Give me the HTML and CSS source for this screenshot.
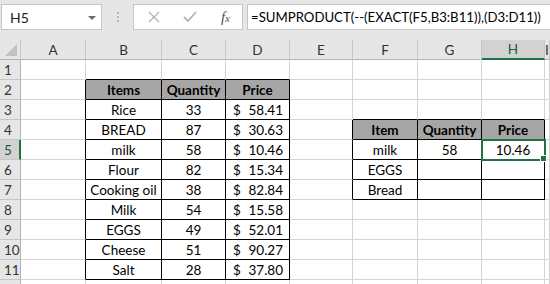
FILE: index.html
```html
<!DOCTYPE html>
<html lang="en">
<head>
  <meta charset="UTF-8">
  <title>SUMPRODUCT EXACT - Sheet</title>
  <link rel="stylesheet" href="styles.css">
</head>
<body>
  <div class="toolbar">
    <div class="name-box">
      <span>H5</span>
      <svg class="caret" width="8" height="4" viewBox="0 0 8 4"><path d="M0 0h8L4 4z" fill="#6d6d6d"/></svg>
    </div>
    <div class="grip">
      <i></i><i></i><i></i>
    </div>
    <div class="fx-buttons">
      <svg width="12" height="12" viewBox="0 0 12 12"><path d="M1 1l10 10M11 1L1 11" stroke="#b4b4b4" stroke-width="1.3" fill="none"/></svg>
      <svg width="14" height="12" viewBox="0 0 14 12"><path d="M1 6l4 4 8-9" stroke="#b4b4b4" stroke-width="1.8" fill="none"/></svg>
      <span class="fx">f<sub>x</sub></span>
    </div>
    <div class="formula">=SUMPRODUCT(--(EXACT(F5,B3:B11)),(D3:D11))</div>
  </div>

  <div class="sheet" id="sheet"></div>

  <script>
    const cols = ['A', 'B', 'C', 'D', 'E', 'F', 'G', 'H', 'I'];
    const selected = { row: 5, col: 'H' };

    // cell values by address
    const cells = {
      B2: 'Items', C2: 'Quantity', D2: 'Price',
      F4: 'Item', G4: 'Quantity', H4: 'Price',
      F5: 'milk', G5: '58', H5: '10.46',
      F6: 'EGGS', F7: 'Bread'
    };

    const items = [
      ['Rice', 33, '58.41'],
      ['BREAD', 87, '30.63'],
      ['milk', 58, '10.46'],
      ['Flour', 82, '15.34'],
      ['Cooking oil', 38, '82.84'],
      ['Milk', 54, '15.58'],
      ['EGGS', 49, '52.01'],
      ['Cheese', 51, '90.27'],
      ['Salt', 28, '37.80']
    ];
    items.forEach((item, i) => {
      cells['B' + (i + 3)] = item[0];
      cells['C' + (i + 3)] = String(item[1]);
      cells['D' + (i + 3)] = '$|' + item[2];
    });

    // bordered ranges: [firstCol, lastCol, firstRow, lastRow]
    const tables = [[1, 3, 2, 11], [5, 7, 4, 7]];
    const headerRows = { 2: [1, 3], 4: [5, 7] };

    function inTable(r, c) {
      return tables.some((t) => c >= t[0] && c <= t[1] && r >= t[2] && r <= t[3]);
    }

    function isHeader(r, c) {
      const h = headerRows[r];
      return h && c >= h[0] && c <= h[1] && inTable(r, c);
    }

    const sheet = document.getElementById('sheet');

    function addCell(text, cls) {
      const div = document.createElement('div');
      div.className = cls;
      if (text) div.textContent = text;
      sheet.appendChild(div);
      return div;
    }

    // column headers
    addCell('', 'corner');
    cols.forEach((c) => {
      addCell(c, 'col-head' + (c === selected.col ? ' active' : ''));
    });

    for (let r = 1; r <= 12; r++) {
      addCell(String(r), 'row-head' + (r === selected.row ? ' active' : ''));
      cols.forEach((c, ci) => {
        const classes = ['cell'];
        if (inTable(r, ci)) classes.push('boxed');
        if (inTable(r, ci + 1)) classes.push('edge-right');
        if (inTable(r + 1, ci)) classes.push('edge-bottom');
        if (isHeader(r, ci)) classes.push('head');
        if (r === selected.row && c === selected.col) classes.push('selected');

        const value = cells[c + r] || '';
        if (value.startsWith('$|')) {
          classes.push('money');
          const div = addCell('', classes.join(' '));
          div.innerHTML = '<span>$</span><span>' + value.slice(2) + '</span>';
        } else {
          addCell(value, classes.join(' '));
        }
      });
    }
  </script>
</body>
</html>
```

FILE: styles.css
```css
body {
  margin: 0;
  padding: 0;
  font-family: Lato, "Open Sans", sans-serif;
  background-color: #e6e6e6;
  color: #000;
  overflow: hidden;
}

.toolbar {
  display: flex;
  align-items: center;
  height: 26px;
  padding: 4px 0 10px 1px;
}

.name-box {
  display: flex;
  align-items: center;
  justify-content: space-between;
  box-sizing: border-box;
  width: 101px;
  height: 26px;
  padding: 0 5px 0 8px;
  background-color: #fff;
  border: 1px solid #c6c6c6;
  font-size: 14px;
  color: #222;
}

.caret {
  margin-top: 1px;
}

.grip {
  display: flex;
  flex-direction: column;
  gap: 2px;
  width: 31px;
  align-items: center;
}

.grip i {
  display: block;
  width: 2px;
  height: 2px;
  background-color: #b8b8b8;
}

.fx-buttons {
  display: flex;
  align-items: center;
  justify-content: space-between;
  box-sizing: border-box;
  width: 110px;
  height: 26px;
  padding: 0 12px 0 14px;
  background-color: #fff;
  border: 1px solid #c6c6c6;
}

.fx {
  font-family: "Liberation Serif", serif;
  font-style: italic;
  font-size: 15px;
  color: #555;
}

.fx sub {
  font-size: 11px;
  vertical-align: 0;
}

.formula {
  flex: 1;
  box-sizing: border-box;
  height: 26px;
  margin-left: 4px;
  padding: 4px 0 0 3px;
  background-color: #fff;
  border: 1px solid #c6c6c6;
  border-right: none;
  font-size: 13.2px;
  white-space: nowrap;
  overflow: hidden;
}

.sheet {
  display: grid;
  grid-template-columns: 21px 65px 76px 64px 64px 63px 65px 64px 63px 1fr;
  grid-auto-rows: 20px;
  font-size: 13.5px;
}

.sheet > div {
  box-sizing: border-box;
  display: flex;
  align-items: center;
  justify-content: center;
  white-space: nowrap;
  overflow: hidden;
}

.corner {
  position: relative;
  background-color: #e6e6e6;
  border-right: 1px solid #c6c6c6;
  border-bottom: 1px solid #b4b4b4;
}

.corner::after {
  content: "";
  position: absolute;
  right: 3px;
  bottom: 3px;
  border-style: solid;
  border-width: 0 0 12px 12px;
  border-color: transparent transparent #c2c2c2 transparent;
}

.col-head {
  background-color: #e6e6e6;
  border-right: 1px solid #c6c6c6;
  border-bottom: 1px solid #b4b4b4;
  color: #333;
}

.row-head {
  justify-content: flex-start !important;
  padding-left: 4px;
  background-color: #e6e6e6;
  border-right: 1px solid #b4b4b4;
  border-bottom: 1px solid #c6c6c6;
  color: #333;
}

.col-head.active {
  background-color: #d2d2d2;
  border-bottom: 2px solid #217346;
  color: #1e5b38;
}

.row-head.active {
  background-color: #d2d2d2;
  border-right: 2px solid #217346;
  color: #1e5b38;
}

.cell {
  background-color: #fff;
  border-right: 1px solid #d4d4d4;
  border-bottom: 1px solid #d4d4d4;
}

.cell.boxed {
  border-right-color: #000;
  border-bottom-color: #000;
}

.cell.edge-right {
  border-right-color: #000;
}

.cell.edge-bottom {
  border-bottom-color: #000;
}

.cell.head {
  background-color: #a6a6a6;
  font-weight: bold;
}

.cell.money {
  justify-content: space-between;
  padding: 0 6px 0 7px;
}

.cell.selected {
  position: relative;
  overflow: visible;
  outline: 2px solid #217346;
  outline-offset: -1px;
  z-index: 1;
}

.cell.selected::after {
  content: "";
  position: absolute;
  right: -3px;
  bottom: -3px;
  width: 5px;
  height: 5px;
  background-color: #217346;
  border: 1px solid #fff;
}
```
